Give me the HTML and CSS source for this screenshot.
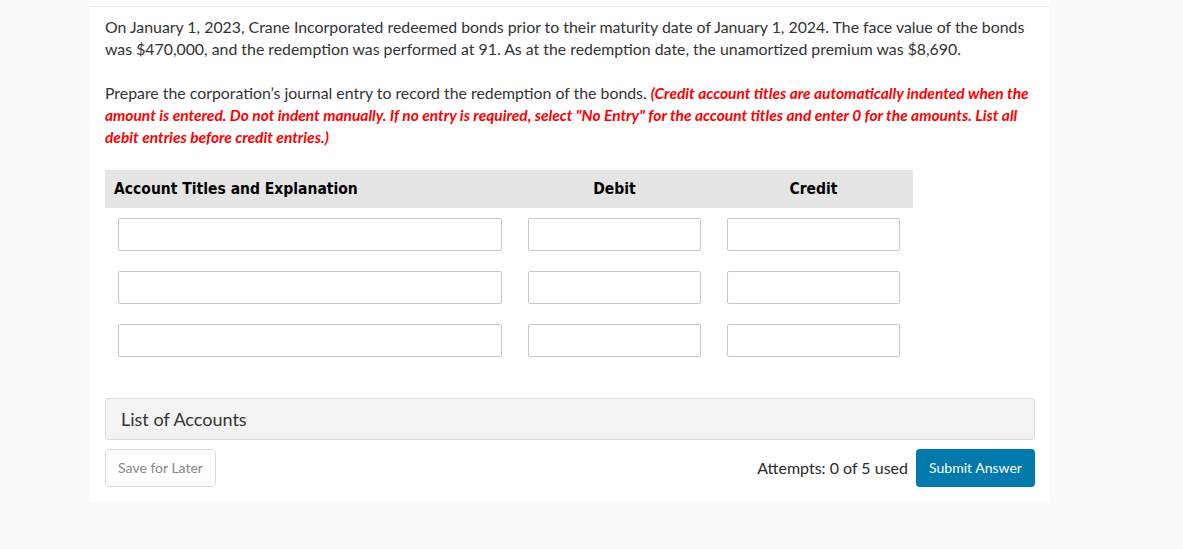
FILE: index.html
```html
<!DOCTYPE html>
<html>
<head>
<meta charset="utf-8">
<link rel="stylesheet" href="styles.css">
</head>
<body>
<div class="panel">
  <div class="content">
    <p class="q">On January 1, 2023, Crane Incorporated redeemed bonds prior to their maturity date of January 1, 2024. The face value of the bonds was $470,000, and the redemption was performed at 91. As at the redemption date, the unamortized premium was $8,690.</p>
    <p class="q">Prepare the corporation’s journal entry to record the redemption of the bonds. <em class="warn">(Credit account titles are automatically indented when the amount is entered. Do not indent manually. If no entry is required, select "No Entry" for the account titles and enter 0 for the amounts. List all debit entries before credit entries.)</em></p>
    <div class="journal">
      <div class="jhead">
        <div class="hc hc-acct">Account Titles and Explanation</div>
        <div class="hc hc-num">Debit</div>
        <div class="hc hc-num">Credit</div>
      </div>
      <div class="jrow">
        <div class="cell"><div class="inp"></div></div>
        <div class="cell"><div class="inp"></div></div>
        <div class="cell"><div class="inp"></div></div>
      </div>
      <div class="jrow">
        <div class="cell"><div class="inp"></div></div>
        <div class="cell"><div class="inp"></div></div>
        <div class="cell"><div class="inp"></div></div>
      </div>
      <div class="jrow">
        <div class="cell"><div class="inp"></div></div>
        <div class="cell"><div class="inp"></div></div>
        <div class="cell"><div class="inp"></div></div>
      </div>
    </div>
    <div class="accounts">List of Accounts</div>
    <div class="actions">
      <div class="btn-save">Save for Later</div>
      <div class="right">
        <span class="attempts">Attempts: 0 of 5 used</span>
        <div class="btn-submit">Submit Answer</div>
      </div>
    </div>
  </div>
</div>
</body>
</html>
```

FILE: styles.css
```css
html, body {
  margin: 0;
  padding: 0;
  background: #f9f9f9;
}
body {
  font-family: Lato, "Open Sans", sans-serif;
  color: #333;
}
.panel {
  margin-left: 90px;
  width: 960px;
  background: #fff;
  padding-top: 6px;
  padding-bottom: 16px;
}
.content {
  border-top: 1px solid #ebebeb;
  padding: 9px 15px 0 15px;
}
.q {
  margin: 0 0 22px 0;
  font-size: 15.85px;
  line-height: 22px;
  color: #333;
}
.warn {
  color: #ff0000;
  font-weight: bold;
  font-style: italic;
  font-size: 15.5px;
}
.journal {
  width: 808px;
}
.jhead {
  display: grid;
  grid-template-columns: 410px 199px 199px;
  background: #e5e5e5;
  height: 38px;
  align-items: center;
}
.hc {
  font-family: "DejaVu Sans Condensed", "DejaVu Sans", Verdana, sans-serif;
  font-weight: bold;
  font-size: 15.5px;
  color: #000;
}
.hc-acct {
  padding-left: 9px;
}
.hc-num {
  text-align: center;
}
.jrow {
  display: grid;
  grid-template-columns: 410px 199px 199px;
  padding-bottom: 20px;
}
.jhead + .jrow {
  padding-top: 10px;
}
.cell {
  padding: 0 13px;
}
.inp {
  height: 31px;
  border: 1px solid #c8c8c8;
  border-radius: 2px;
  background: #fff;
}
.accounts {
  margin-top: 21px;
  height: 40px;
  border: 1px solid #dcdcdc;
  border-radius: 3px;
  background: #f3f3f3;
  font-size: 18px;
  line-height: 40px;
  padding-left: 15px;
  color: #333;
}
.actions {
  margin-top: 9px;
  display: flex;
  justify-content: space-between;
  align-items: center;
}
.btn-save {
  width: 109px;
  height: 36px;
  border: 1px solid #dcdcdc;
  border-radius: 4px;
  font-size: 14px;
  line-height: 36px;
  text-align: center;
  color: #888;
}
.right {
  display: flex;
  align-items: center;
  gap: 8px;
}
.attempts {
  font-size: 16px;
  color: #2a2a2a;
  padding-bottom: 2px;
}
.btn-submit {
  width: 119px;
  height: 38px;
  border-radius: 4px;
  background: #0079ad;
  color: #fff;
  font-size: 14px;
  line-height: 38px;
  text-align: center;
}
```
